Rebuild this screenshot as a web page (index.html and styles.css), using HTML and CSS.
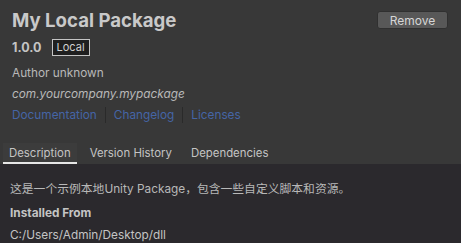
FILE: index.html
```html
<!DOCTYPE html>
<html lang="en">
<head>
  <meta charset="UTF-8">
  <title>My Local Package</title>
  <link rel="stylesheet" href="styles.css">
</head>
<body>
  <div class="header">
    <div class="title-row">
      <h1 class="title">My Local Package</h1>
      <button class="remove">Remove</button>
    </div>
    <div class="version-row">
      <span class="version">1.0.0</span>
      <span class="badge">Local</span>
    </div>
    <p class="author">Author unknown</p>
    <p class="pkg-name">com.yourcompany.mypackage</p>
    <div class="links">
      <a href="#">Documentation</a>
      <span class="sep"></span>
      <a href="#">Changelog</a>
      <span class="sep"></span>
      <a href="#">Licenses</a>
    </div>
    <div class="tabs">
      <div class="tab active">Description</div>
      <div class="tab">Version History</div>
      <div class="tab">Dependencies</div>
    </div>
  </div>
  <div class="content">
    <p class="desc">这是一个示例本地Unity Package，包含一些自定义脚本和资源。</p>
    <p class="label">Installed From</p>
    <p class="path">C:/Users/Admin/Desktop/dll</p>
  </div>
</body>
</html>
```

FILE: styles.css
```css
body {
  margin: 0;
  font-family: Inter, "Noto Sans CJK SC", sans-serif;
  background: #2b292d;
  color: #c4c4c4;
  font-size: 11.8px;
  overflow: hidden;
}
p {
  margin: 0;
}
.header {
  background: #383838;
  padding: 8px 0 0 12px;
}
.title-row {
  display: flex;
  justify-content: space-between;
  align-items: flex-start;
  padding-right: 13px;
}
.title {
  margin: 0;
  font-size: 18.6px;
  font-weight: 700;
  color: #c9c9c9;
  line-height: 24px;
}
.remove {
  margin-top: 3px;
  width: 71px;
  height: 18px;
  padding: 0;
  background: #585858;
  border: 1px solid #303030;
  border-radius: 3px;
  color: #d6d6d6;
  font-family: inherit;
  font-size: 12px;
}
.version-row {
  display: flex;
  align-items: center;
  gap: 10px;
  margin-top: 7px;
}
.version {
  font-weight: 700;
  font-size: 12.5px;
}
.badge {
  border: 1px solid #c4c4c4;
  background: #1f1f1f;
  padding: 0 4px;
  line-height: 15px;
  font-size: 11px;
  color: #d0d0d0;
}
.author {
  margin-top: 9px;
  line-height: 16px;
  color: #b8b8b8;
}
.pkg-name {
  margin-top: 5px;
  line-height: 16px;
  font-style: italic;
  color: #b8b8b8;
}
.links {
  display: flex;
  align-items: center;
  gap: 8px;
  margin-top: 4px;
  height: 18px;
}
.links a {
  color: #4565a6;
  text-decoration: none;
}
.sep {
  width: 1px;
  height: 16px;
  background: #2a2a2a;
}
.tabs {
  display: flex;
  margin-top: 19px;
  margin-left: -9px;
  gap: 7px;
}
.tab {
  padding: 0 6px;
  line-height: 20px;
  height: 21px;
  font-size: 11.4px;
}
.tab.active {
  background: #3c3c3c;
  border-bottom: 2px solid #e6e6e6;
  height: 19px;
}
.content {
  padding: 17px 10px 0;
}
.desc {
  line-height: 16px;
  color: #b8b8b8;
}
.label {
  margin-top: 8px;
  font-weight: 700;
  line-height: 16px;
}
.path {
  margin-top: 6px;
  line-height: 16px;
}
```
